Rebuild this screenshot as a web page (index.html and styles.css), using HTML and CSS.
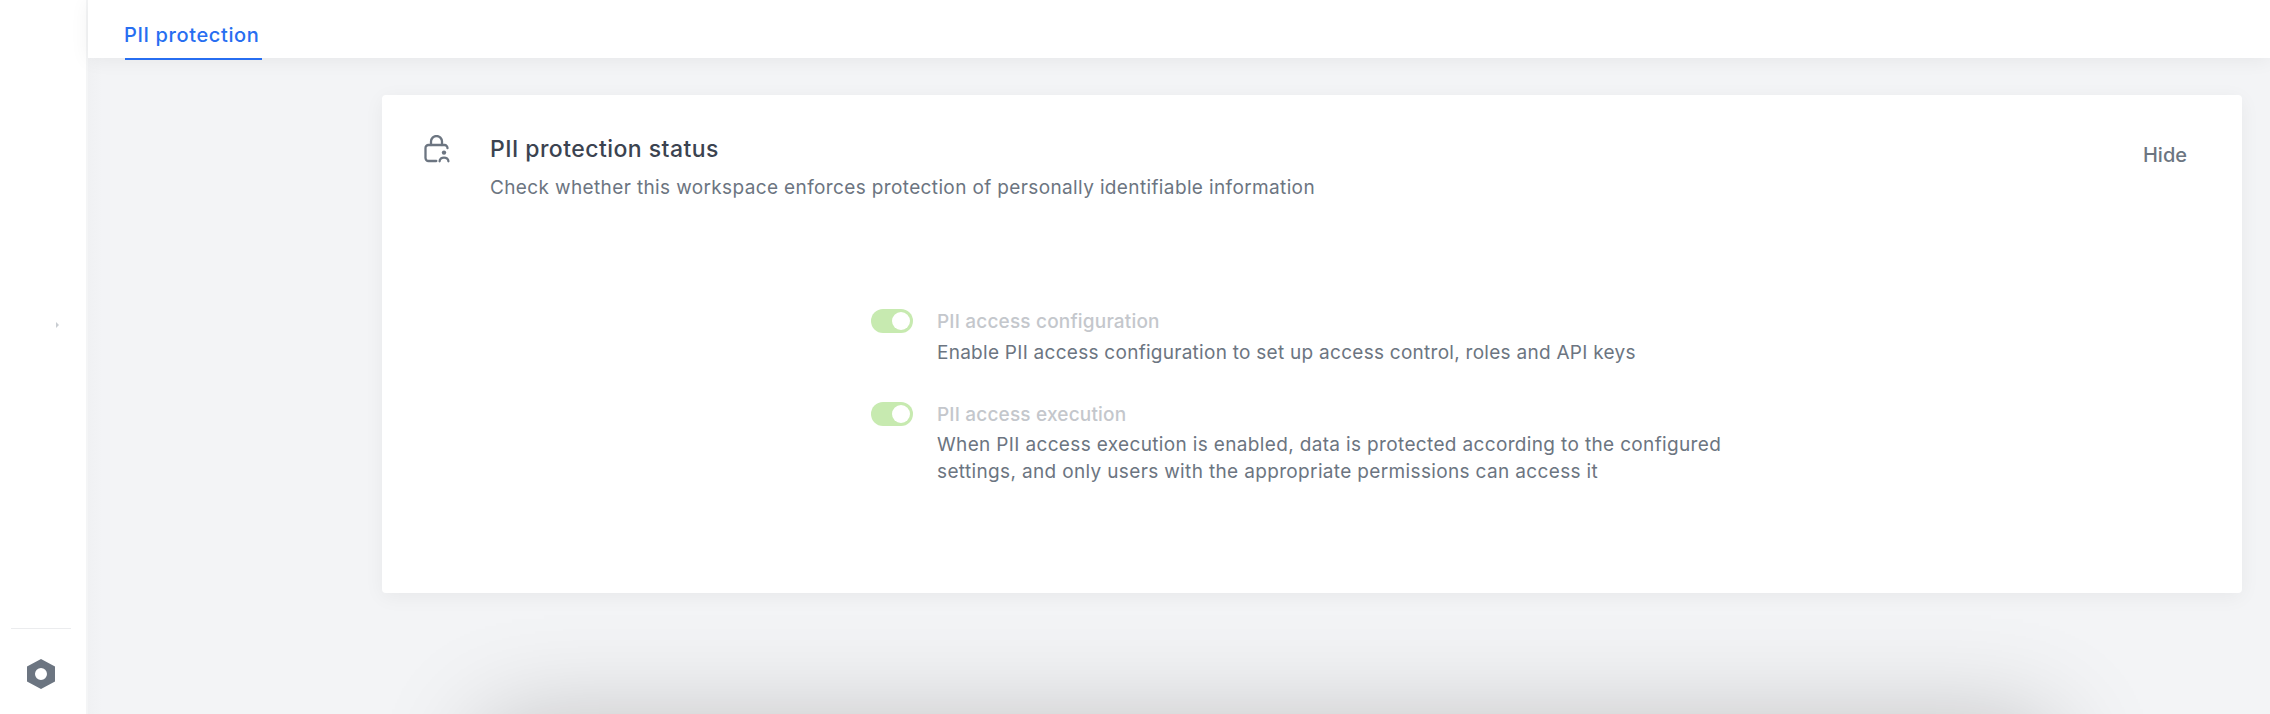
FILE: index.html
```html
<!DOCTYPE html>
<html lang="en">
<head>
    <meta charset="UTF-8">
    <meta name="viewport" content="width=device-width, initial-scale=1.0">
    <title>PII protection</title>
    <link rel="stylesheet" href="styles.css">
</head>
<body>
    <div class="app">
        <aside class="sidebar">
            <div class="sidebar-menu"><span class="expand-mark"></span></div>
            <div class="sidebar-footer">
                <svg class="settings-icon" width="28" height="30" viewBox="0 0 28 30">
                    <path fill="#6c7581" fill-rule="evenodd" d="M14 0 28 7.5v15L14 30 0 22.5v-15zM14 9a6 6 0 1 0 0 12 6 6 0 0 0 0-12z"/>
                </svg>
            </div>
        </aside>
        <div class="main">
            <nav class="tabs">
                <a class="tab">PII protection</a>
            </nav>
            <section class="card">
                <header class="card-header">
                    <svg class="lock-icon" width="26" height="28" viewBox="0 0 26 28" fill="none" stroke="#6c7581" stroke-width="2.3" stroke-linecap="round">
                        <path d="M7 10V6.500a5.500 5.500 0 0 1 11 0V10"/>
                        <path d="M12.300 26H4.500a3 3 0 0 1-3-3V13a3 3 0 0 1 3-3h16a3 3 0 0 1 3 3.200"/>
                        <circle cx="20" cy="17.600" r="2.200" fill="#6c7581" stroke="none"/>
                        <path d="M15.600 26.300c0-5 8.800-5 8.800 0"/>
                    </svg>
                    <div class="card-heading">
                        <h1>PII protection status</h1>
                        <p class="card-desc">Check whether this workspace enforces protection of personally identifiable information</p>
                    </div>
                    <button class="hide-btn">Hide</button>
                </header>
                <div class="settings">
                    <div class="setting">
                        <span class="toggle"></span>
                        <div class="setting-text">
                            <h2>PII access configuration</h2>
                            <p class="text-config">Enable PII access configuration to set up access control, roles and API keys</p>
                        </div>
                    </div>
                    <div class="setting">
                        <span class="toggle"></span>
                        <div class="setting-text">
                            <h2>PII access execution</h2>
                            <p class="text-exec">When PII access execution is enabled, data is protected according to the configured<br>settings, and only users with the appropriate permissions can access it</p>
                        </div>
                    </div>
                </div>
            </section>
        </div>
        <div class="bottom-shadow"></div>
    </div>
</body>
</html>
```

FILE: styles.css
```css
* {
    box-sizing: border-box;
}
body {
    margin: 0;
    font-family: Inter, sans-serif;
    font-size: 19px;
    color: #6c7581;
    background: #f3f4f6;
}
h1, h2, p {
    margin: 0;
}
.app {
    position: relative;
    display: flex;
    height: 714px;
    overflow: hidden;
}
.sidebar {
    width: 88px;
    flex-shrink: 0;
    display: flex;
    flex-direction: column;
    background: #fff;
    border-right: 2px solid #f4f5f6;
}
.sidebar-menu {
    height: 628px;
    padding: 322px 0 0 56px;
}
.expand-mark {
    display: block;
    width: 0;
    border-left: 3px solid #c9cdd2;
    border-top: 3px solid transparent;
    border-bottom: 3px solid transparent;
}
.sidebar-footer {
    width: 60px;
    margin-left: 11px;
    padding: 30px 0 0 16px;
    border-top: 1px solid #ebecee;
}
.settings-icon {
    display: block;
}
.main {
    flex: 1;
    background: linear-gradient(90deg, #f0f1f3, #f3f4f6 14px);
}
.tabs {
    height: 58px;
    padding-left: 37px;
    background: #fff;
    box-shadow: 0 2px 20px rgba(0, 0, 0, 0.06);
}
.tab {
    display: inline-block;
    width: 137px;
    height: 60px;
    padding-top: 21px;
    line-height: 28px;
    font-weight: 550;
    font-size: 20px;
    letter-spacing: 0.62px;
    text-indent: -1px;
    white-space: nowrap;
    color: #276ef1;
    border-bottom: 2px solid #276ef1;
}
.card {
    width: 1860px;
    height: 498px;
    margin: 37px 0 0 294px;
    padding: 40px 55px 0 42px;
    background: #fff;
    border-radius: 4px;
    box-shadow: 0 4px 20px rgba(0, 0, 0, 0.05);
}
.card-header {
    display: flex;
    align-items: flex-start;
}
.lock-icon {
    flex-shrink: 0;
}
.card-heading {
    flex: 1;
    margin-left: 40px;
}
h1 {
    font-size: 23px;
    line-height: 28px;
    font-weight: 550;
    letter-spacing: 0.46px;
    color: #3b4350;
}
.card-desc {
    margin-top: 11px;
    line-height: 28px;
    letter-spacing: 0.37px;
}
.hide-btn {
    margin-top: 6px;
    padding: 0;
    border: none;
    background: none;
    font: 550 20px/28px Inter, sans-serif;
    color: #6c7581;
}
.settings {
    display: flex;
    flex-direction: column;
    gap: 35px;
    margin: 106px 0 0 447px;
}
.setting {
    display: flex;
    gap: 24px;
}
.toggle {
    width: 42px;
    height: 24px;
    margin-top: 1px;
    padding: 3px 3px 3px 21px;
    border-radius: 12px;
    background: #c7eab0;
}
.toggle::before {
    content: "";
    display: block;
    width: 18px;
    height: 18px;
    border-radius: 50%;
    background: #fff;
}
h2 {
    font-size: 19px;
    line-height: 27px;
    font-weight: 550;
    letter-spacing: 0.18px;
    color: #c4c7cc;
}
.setting-text p {
    margin-top: 4px;
    line-height: 27px;
    white-space: nowrap;
}
.setting-text .text-config {
    letter-spacing: 0.27px;
}
.setting-text .text-exec {
    margin-top: 3px;
    letter-spacing: 0.35px;
}
/* shadow of the panel that sits below the fold */
.bottom-shadow {
    position: absolute;
    left: 485px;
    top: 724px;
    width: 1565px;
    height: 400px;
    box-shadow: 0 0 100px rgba(0, 0, 0, 0.23);
}
```
